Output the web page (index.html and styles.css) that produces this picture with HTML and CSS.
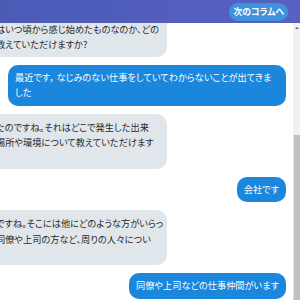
FILE: index.html
```html
<!DOCTYPE html>
<html lang="ja">
<head>
<meta charset="utf-8">
<link rel="stylesheet" href="styles.css">
</head>
<body>
<header class="header">
  <button class="next-btn">次のコラムへ</button>
</header>
<main class="main">
  <section class="chat">
    <div class="messages">
      <div class="bubble bot first">なるほど、そういった不安があるのですね。それ<br>はいつ頃から感じ始めたものなのか、どの<br>教えていただけますか?</div>
      <div class="bubble user">最近です，&nbsp;なじみのない仕事をしていてわからないことが出てきました</div>
      <div class="bubble bot">たのですね。それはどこで発生した出来<br>場所や環境について教えていただけます</div>
      <div class="bubble user">会社です</div>
      <div class="bubble bot">ですね。そこには他にどのような方がいらっ<br>同僚や上司の方など、周りの人々につい</div>
      <div class="bubble user">同僚や上司などの仕事仲間がいます</div>
    </div>
  </section>
  <div class="scrollbar">
    <div class="scroll-arrow"></div>
    <div class="scroll-track"></div>
    <div class="scroll-thumb"></div>
  </div>
</main>
</body>
</html>
```
FILE: styles.css
```css
* { box-sizing: border-box; }
html, body {
  margin: 0;
  padding: 0;
  width: 300px;
  height: 300px;
  overflow: hidden;
  background: #ffffff;
  font-family: "Noto Sans CJK JP", "Noto Sans", sans-serif;
  font-feature-settings: "palt";
}
.header {
  height: 23px;
  background: linear-gradient(90deg, #4b5bb6 0%, #5761c2 100%);
  display: flex;
  justify-content: flex-end;
  align-items: center;
  padding-right: 12px;
}
.next-btn {
  border: none;
  background: #4192dc;
  color: #ffffff;
  font-family: inherit;
  font-feature-settings: "palt";
  font-weight: 700;
  font-size: 8.8px;
  height: 18px;
  padding: 0 4px;
  border-radius: 9px;
  line-height: 18px;
}
.main {
  display: flex;
  height: 277px;
}
.chat {
  flex: 1;
  overflow: hidden;
}
.messages {
  display: flex;
  flex-direction: column;
  gap: 8px;
  margin-top: -22px;
  padding-right: 7px;
}
.bubble {
  font-size: 9.2px;
  line-height: 15.5px;
  border-radius: 10px;
  white-space: nowrap;
}
.bot {
  align-self: flex-start;
  background: #e1e6ea;
  color: #26292d;
  width: 177px;
  margin-left: -10px;
  padding: 6px 6px 18px;
  overflow: hidden;
}
.bot.first {
  padding: 5px 6px 4px;
}
.user {
  align-self: flex-end;
  background: #1a86dc;
  color: #ffffff;
  max-width: 278px;
  padding: 5px 7px;
  white-space: normal;
}
.scrollbar {
  width: 7px;
  display: flex;
  flex-direction: column;
  background: #f1f1f1;
}
.scroll-arrow {
  height: 8px;
  display: flex;
  justify-content: center;
  align-items: center;
}
.scroll-arrow::before {
  content: "";
  border-left: 2px solid transparent;
  border-right: 2px solid transparent;
  border-bottom: 2px solid #606060;
  margin-top: 2px;
}
.scroll-track {
  height: 104px;
}
.scroll-thumb {
  flex: 1;
  background: #c1c1c1;
  border-left: 1px solid #e0e0e0;
}
```
